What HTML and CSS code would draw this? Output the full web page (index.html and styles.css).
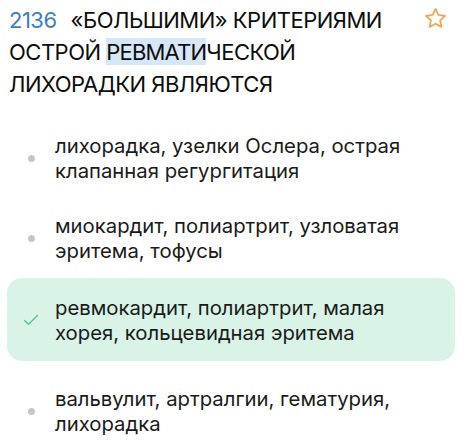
FILE: index.html
```html
<!DOCTYPE html>
<html lang="ru">
<head>
<meta charset="utf-8">
<link rel="stylesheet" href="styles.css">
</head>
<body>
<div class="question">
  <div class="title"><span class="num">2136</span>«БОЛЬШИМИ» КРИТЕРИЯМИ ОСТРОЙ <span class="hl">РЕВМАТИ</span>ЧЕСКОЙ ЛИХОРАДКИ ЯВЛЯЮТСЯ</div>
  <svg class="star" width="25" height="25" viewBox="0 0 24 24"><path d="M12 2.8l2.75 5.8 6.35.8-4.65 4.4 1.2 6.3L12 17l-5.65 3.1 1.2-6.3L2.9 9.4l6.35-.8z" fill="none" stroke="#f5a54f" stroke-width="1.7" stroke-linejoin="round"/></svg>
</div>
<div class="options">
  <div class="option"><span class="marker"><span class="dot"></span></span><span class="text">лихорадка, узелки Ослера, острая клапанная регургитация</span></div>
  <div class="option"><span class="marker"><span class="dot"></span></span><span class="text">миокардит, полиартрит, узловатая эритема, тофусы</span></div>
  <div class="option correct"><span class="marker"><svg width="16" height="12" viewBox="0 0 16 12"><path d="M1.5 6.5l4 3.8L14.5 1.5" fill="none" stroke="#54c48c" stroke-width="1.3" stroke-linecap="round" stroke-linejoin="round"/></svg></span><span class="text">ревмокардит, полиартрит, малая хорея, кольцевидная эритема</span></div>
  <div class="option"><span class="marker"><span class="dot"></span></span><span class="text">вальвулит, артралгии, гематурия, лихорадка</span></div>
</div>
</body>
</html>
```

FILE: styles.css
```css
html, body {
  margin: 0;
  padding: 0;
  background: #ffffff;
}
body {
  width: 466px;
  height: 446px;
  overflow: hidden;
  font-family: Inter, "Noto Sans", sans-serif;
  color: #0d0d0d;
}
.question {
  display: flex;
  align-items: flex-start;
  padding: 4px 18px 0 9px;
  gap: 12px;
}
.title {
  flex: 1;
  font-size: 22px;
  line-height: 32px;
  letter-spacing: -0.5px;
}
.num {
  color: #3b7fc0;
  margin-right: 14px;
}
.hl {
  background: #d6e7f7;
  padding-top: 1px;
  letter-spacing: -0.8px;
}
.star {
  flex: none;
  margin-left: auto;
  margin-top: 2px;
}
.options {
  display: flex;
  flex-direction: column;
  margin: 18px 11px 0 7px;
}
.option {
  display: flex;
  align-items: center;
  padding: 15px 28px 15px 0;
  border-radius: 15px;
}
.option.correct {
  background: #d9f3e6;
  padding: 16.5px 28px 16.5px 0;
  margin: 0 0 10px;
}
.marker {
  flex: none;
  width: 48px;
  display: flex;
  justify-content: center;
  align-items: center;
}
.dot {
  width: 7px;
  height: 7px;
  border-radius: 50%;
  background: #c6c6c6;
}
.text {
  font-size: 20.3px;
  line-height: 25px;
  color: #1a1a1a;
}
```
